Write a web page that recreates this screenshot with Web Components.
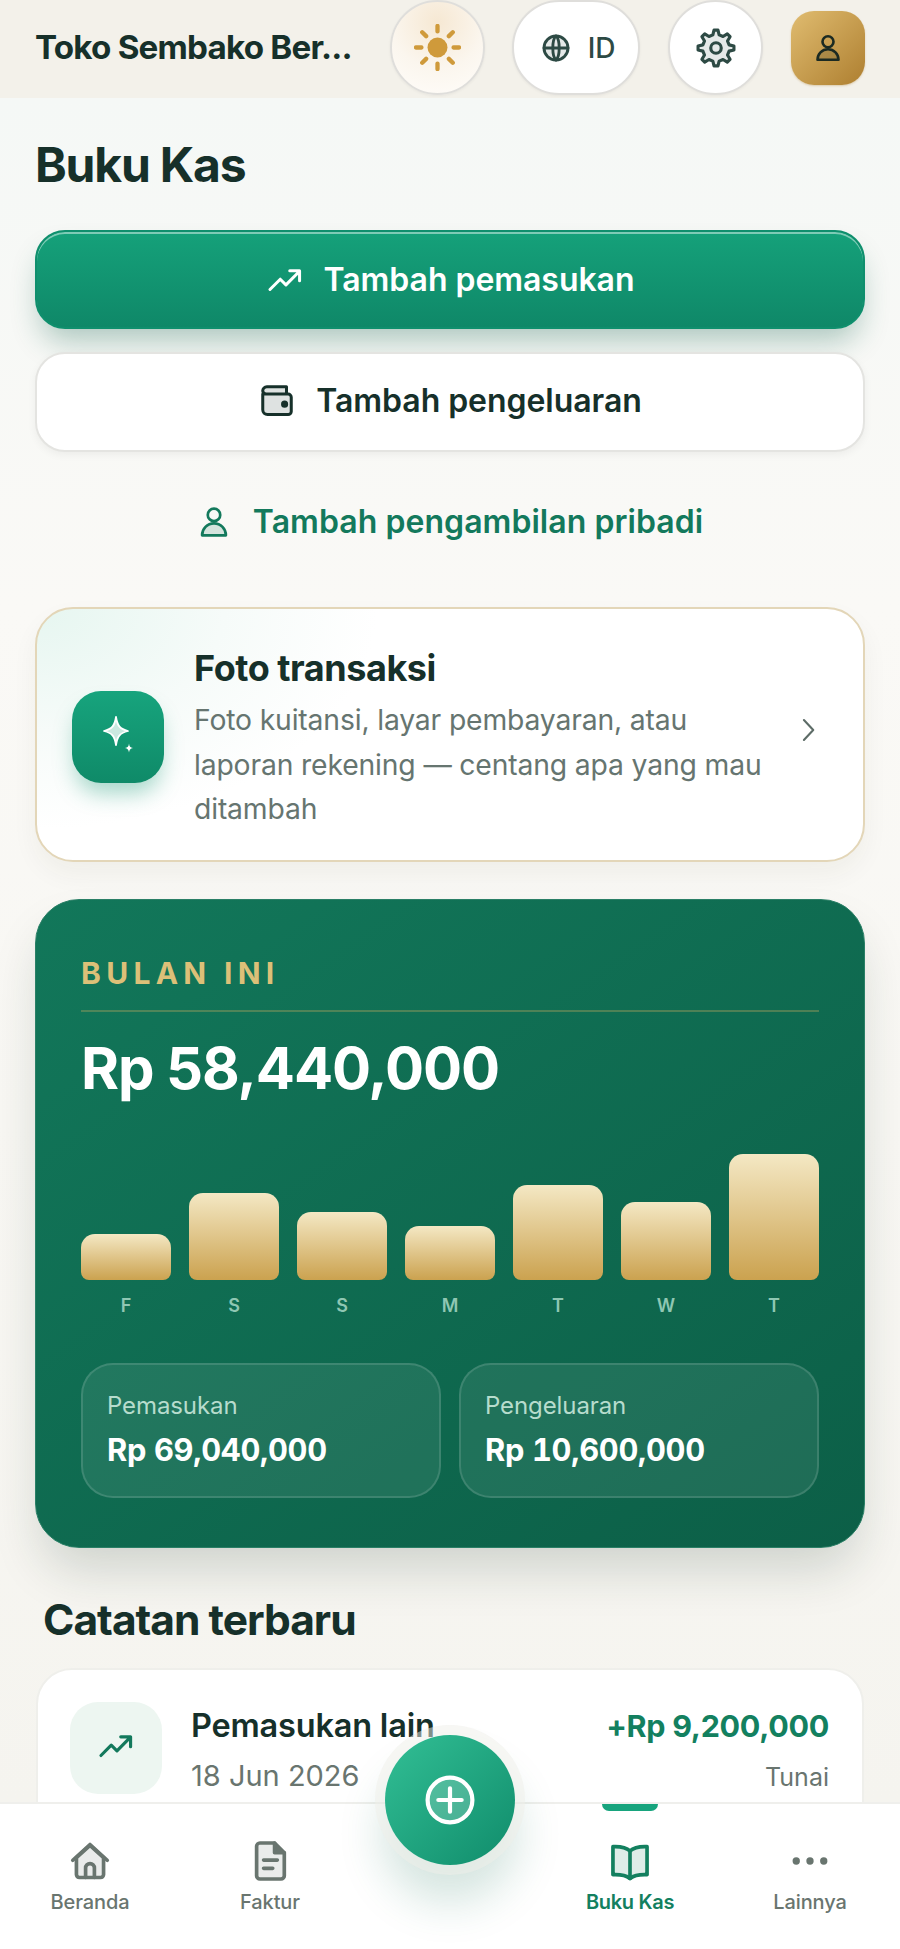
<!DOCTYPE html>
<html lang="id"><head><meta charset="utf-8"><title>Buku Kas</title>
<style>
html,body{margin:0;padding:0;height:1949px;overflow:hidden;background:#f8f8f5;font-family:Inter,"Liberation Sans",sans-serif;color:#16302a}
</style></head><body>
<x-app>
  <x-topbar slot="top" name="Toko Sembako Ber..."></x-topbar>
  <x-heading>Buku Kas</x-heading>
  <x-action kind="primary" icon="trend">Tambah pemasukan</x-action>
  <x-action kind="secondary" icon="wallet">Tambah pengeluaran</x-action>
  <x-action kind="ghost" icon="user">Tambah pengambilan pribadi</x-action>
  <x-promo heading="Foto transaksi">Foto kuitansi, layar pembayaran, atau laporan rekening — centang apa yang mau ditambah</x-promo>
  <x-month label="BULAN INI" amount="Rp 58,440,000">
    <x-stat label="Pemasukan" value="Rp 69,040,000"></x-stat>
    <x-stat label="Pengeluaran" value="Rp 10,600,000"></x-stat>
  </x-month>
  <x-section>Catatan terbaru</x-section>
  <x-tx title="Pemasukan lain" date="18 Jun 2026" amount="+Rp 9,200,000" method="Tunai"></x-tx>
  <x-nav slot="bottom"></x-nav>
</x-app>
<script>
function gearPath(){
  const n=8,R=10.3,r=7.7,pts=[];
  for(let i=0;i<n;i++){
    const a=i*2*Math.PI/n-Math.PI/2,s=2*Math.PI/n;
    [[-.30,r],[-.14,R],[.14,R],[.30,r]].forEach(([o,rad])=>pts.push([12+rad*Math.cos(a+o*s),12+rad*Math.sin(a+o*s)]));
  }
  return 'M'+pts.map(p=>p[0].toFixed(2)+' '+p[1].toFixed(2)).join('L')+'Z';
}
const ICONS={
 sun:'<circle cx="12" cy="12" r="5.100" fill="currentColor" stroke="none"/><path d="M12 1v2.800M12 20.200V23M1 12h2.800M20.200 12H23M4.200 4.200l2 2M17.800 17.800l2 2M4.200 19.800l2-2M17.800 6.200l2-2"/>',
 globe:'<circle cx="12" cy="12" r="9.600" fill="currentColor" fill-opacity=".12"/><path d="M2.400 12h19.200M12 2.400c-3.400 3-3.400 16.200 0 19.200M12 2.400c3.400 3 3.400 16.200 0 19.200"/>',
 gear:'<path d="'+gearPath()+'" fill="currentColor" fill-opacity=".12"/><circle cx="12" cy="12" r="3"/>',
 user:'<circle cx="12" cy="7" r="4.400"/><path d="M3.600 21.400c0-4.600 3.600-8.400 8.400-8.400s8.400 3.800 8.400 8.400z" fill="currentColor" fill-opacity=".16"/>',
 trend:'<path d="M2.500 18 9 11.500l3.600 3.600L21 6.600M15 6.200h6.200v6.200" />',
 wallet:'<path d="M3 7.600v10a3 3 0 0 0 3 3h13a2 2 0 0 0 2-2V9.600a2 2 0 0 0-2-2H5.200A2.200 2.200 0 0 1 3 5.600 2.600 2.600 0 0 1 5.600 3H18v4.600" fill="currentColor" fill-opacity=".14"/><circle cx="16.800" cy="14" r="1.300" fill="currentColor"/>',
 spark:'<path d="M11 2c.7 4.500 2 6 6 7-4 1-5.300 2.500-6 7-.7-4.500-2-6-6-7 4-1 5.300-2.500 6-7z" fill="currentColor" fill-opacity=".78" stroke="currentColor" stroke-width=".9"/><path d="M17.500 15.200c.2 1.500.6 2 2 2.300-1.400.3-1.800.8-2 2.300-.2-1.500-.6-2-2-2.300 1.400-.3 1.800-.8 2-2.300z" fill="currentColor" stroke="none"/>',
 chev:'<path d="m8.500 3.500 8 8.500-8 8.500"/>',
 plus:'<circle cx="12" cy="12" r="9.600" fill="currentColor" fill-opacity=".2"/><path d="M12 7v10M7 12h10"/>',
 home:'<path d="M2.600 11.600 12 3l9.400 8.600" /><path d="M4.600 10.200v9.200a1.600 1.600 0 0 0 1.600 1.600h11.600a1.600 1.600 0 0 0 1.600-1.600v-9.200L12 3.500z" fill="currentColor" fill-opacity=".14"/><path d="M9.600 21v-5.200a2.400 2.400 0 0 1 4.800 0V21"/>',
 doc:'<path d="M6.500 2.200h8l5.300 5.300V20a1.800 1.800 0 0 1-1.800 1.800H6.500A1.800 1.800 0 0 1 4.700 20V4a1.800 1.800 0 0 1 1.800-1.800z" fill="currentColor" fill-opacity=".14"/><path d="M14.500 2.200v5.300h5.300" fill="currentColor"/><path d="M8.500 11.500h7.500M8.500 16h5"/>',
 book:'<path d="M12 6.500C10 4.700 7 4 2.700 4.200v15.300C7 19.300 10 20 12 21.500c2-1.500 5-2.200 9.300-2V4.200C17 4 14 4.700 12 6.500z" fill="currentColor" fill-opacity=".14"/><path d="M12 6.500v15"/>',
 dots:'<circle cx="4.500" cy="12" r="2" fill="currentColor" stroke="none"/><circle cx="12" cy="12" r="2" fill="currentColor" stroke="none"/><circle cx="19.500" cy="12" r="2" fill="currentColor" stroke="none"/>'
};
function def(tag,css,html,setup){
  customElements.define(tag,class extends HTMLElement{
    connectedCallback(){
      if(this.shadowRoot)return;
      const a=this.attachShadow({mode:'open'});
      a.innerHTML='<style>'+css+'</style>'+(typeof html==='function'?html(this):html);
      if(setup)setup(this,a);
    }
  });
}
def('x-icon',':host{display:inline-flex;width:var(--s,24px);height:var(--s,24px);flex:none}svg{width:100%;height:100%;fill:none;stroke:currentColor;stroke-width:var(--w,2);stroke-linecap:round;stroke-linejoin:round;display:block}',
  h=>'<svg viewBox="0 0 24 24" aria-hidden="true">'+ICONS[h.getAttribute('name')]+'</svg>');
def('x-app',':host{display:flex;flex-direction:column;height:1949px;position:relative;overflow:hidden}.main{flex:1;min-height:0;overflow:hidden;display:flex;flex-direction:column;padding:0 35px;background:linear-gradient(180deg,#f5f8f6 0,#faf9f6 30%,#f8f7f3 60%,#f5f4ef 100%)}',
  '<slot name="top"></slot><div class="main"><slot></slot></div><slot name="bottom"></slot>');
def('x-topbar',`:host{display:flex;align-items:center;height:98px;background:#f3f1ea;padding:0 35px 3px;box-sizing:border-box;flex:none;gap:0}
 .t{flex:none;width:355px;font:700 33.200px/1 Inter,sans-serif;letter-spacing:-.8px;color:#16302a;white-space:nowrap}
 .b{box-sizing:border-box;height:95px;background:#fff;border:2px solid #dfdedb;border-radius:48px;display:flex;align-items:center;justify-content:center;color:#2d4a44;box-shadow:0 1px 3px rgba(0,0,0,.05)}
 .sun{width:95px;margin-left:0;color:#cf9a3b;background:radial-gradient(circle at 50% 22%,#f6e8d3 0,#fbf6ee 55%,#fffdfa 100%)}
 .lang{width:129px;margin-left:27px;gap:17px;font:550 28px/1 Inter,sans-serif;padding-left:4px}
 .gear{width:95px;margin-left:28px}
 .av{box-sizing:border-box;width:74px;height:74px;border-radius:23px;margin-left:28px;background:linear-gradient(135deg,#e0bc70,#ae7f30);display:flex;align-items:center;justify-content:center;color:#1b2a22;box-shadow:0 1px 2px rgba(170,120,40,.3)}`,
 h=>`<div class="t">${h.getAttribute('name')}</div>
 <div class="b sun" aria-label="Tema"><x-icon name="sun" style="--s:47px;--w:2.200"></x-icon></div>
 <div class="b lang"><x-icon name="globe" style="--s:30px;--w:2.300"></x-icon><span>ID</span></div>
 <div class="b gear"><x-icon name="gear" style="--s:42px;--w:1.800"></x-icon></div>
 <div class="av"><x-icon name="user" style="--s:30px;--w:2.100"></x-icon></div>`);
def('x-heading',':host{display:block;font:700 48px/54px Inter,sans-serif;letter-spacing:-1.200px;color:#16302a;margin:40px 0 38px}','<slot></slot>');
def('x-action',`:host{display:flex;align-items:center;justify-content:center;box-sizing:border-box;height:99px;gap:20px;border-radius:30px;font:600 32px/1 Inter,sans-serif;letter-spacing:-.05px;flex:none;white-space:nowrap}
 :host([kind=primary]){color:#fff;background:linear-gradient(180deg,#15a17a,#0f8868);border:2px solid #0f8f6d;box-shadow:inset 0 2px 0 rgba(255,255,255,.45),0 18px 30px -6px rgba(15,95,75,.32);margin-bottom:23px}
 :host([kind=secondary]){color:#16302a;background:#fff;border:2px solid #e4e4e1;box-shadow:0 3px 8px rgba(0,0,0,.05);height:100px;padding-bottom:3px;margin-bottom:21px}
 :host([kind=ghost]){color:#13795c;height:98px;margin-bottom:36px;gap:22px;letter-spacing:.05px}
 :host([kind=ghost]) x-icon{--s:34px}
 x-icon{--s:38px;--w:1.900}`,
 h=>`<x-icon name="${h.getAttribute('icon')}"></x-icon><span><slot></slot></span>`);
def('x-promo',`:host{display:flex;align-items:center;box-sizing:border-box;height:255px;border:2px solid #e3d6b8;border-radius:38px;padding:5px 41px 0 35px;background:radial-gradient(ellipse 340px 220px at 0 0,#e6f6f0 0,#f6fbf9 55%,#fff 100%),#fff;box-shadow:0 12px 26px rgba(60,50,20,.05);flex:none;margin-bottom:37px}
 .tile{width:92px;height:92px;border-radius:29px;background:linear-gradient(180deg,#17a47d,#0f8a68);color:#fff;display:flex;align-items:center;justify-content:center;box-shadow:0 14px 22px -4px rgba(20,150,115,.38);flex:none}
 .c{flex:1;margin-left:30px;min-width:0;padding-top:5px}
 .h{font:700 36px/42px Inter,sans-serif;letter-spacing:-.45px;color:#16302a;margin-bottom:9px}
 .p{font:400 28.300px/44.750px Inter,sans-serif;letter-spacing:-.15px;color:#667570;width:575px}
 .chev{color:#5d6c67;margin:0 0 14px 6px}`,
 h=>`<div class="tile"><x-icon name="spark" style="--s:48px"></x-icon></div><div class="c"><div class="h">${h.getAttribute('heading')}</div><div class="p"><slot></slot></div></div><x-icon class="chev" name="chev" style="--s:28px;--w:1.800"></x-icon>`);
def('x-bar',':host{display:flex;flex-direction:column;align-items:stretch;justify-content:flex-end;height:100%}.b{height:var(--h);border-radius:14px 14px 8px 8px;background:linear-gradient(180deg,#f4e8c4,#cba24f)}','<div class="b"></div>');
def('x-month',`:host{display:block;box-sizing:border-box;height:649px;border-radius:44px;padding:58px 45px 0;background:linear-gradient(145deg,#12775a,#0c5f47);box-shadow:0 28px 50px -8px rgba(20,50,40,.18);border:1px solid #2a7f66;flex:none;margin-bottom:48px;color:#fff}
 .l{font:700 30px/30px Inter,sans-serif;letter-spacing:5.300px;color:#dcc078;padding-bottom:22px;border-bottom:2px solid rgba(210,175,95,.32)}
 .a{font:700 58px/68px Inter,sans-serif;letter-spacing:-1.100px;margin-top:22px;color:#fff}
 .bars{display:grid;grid-template-columns:repeat(7,1fr);column-gap:18px;height:127px;margin-top:51px}
 .days{display:grid;grid-template-columns:repeat(7,1fr);column-gap:18px;margin-top:14px;font:600 18px/24px Inter,sans-serif;color:#8fc7b3;text-align:center}
 .stats{display:grid;grid-template-columns:1fr 1fr;gap:18px;margin-top:45px}`,
 h=>{const H=[46,87,68,54,95,78,126],D=['F','S','S','M','T','W','T'];return `<div class="l">${h.getAttribute('label')}</div><div class="a">${h.getAttribute('amount')}</div>
 <div class="bars">${H.map(v=>`<x-bar style="--h:${v}px"></x-bar>`).join('')}</div>
 <div class="days">${D.map(d=>`<span>${d}</span>`).join('')}</div><div class="stats"><slot></slot></div>`});
def('x-stat',`:host{display:block;box-sizing:border-box;height:135px;border-radius:32px;background:rgba(255,255,255,.08);border:2px solid rgba(255,255,255,.13);padding:25px 0 0 24px}
 .k{font:400 24px/32px Inter,sans-serif;color:#b7dccd;letter-spacing:-.1px}.v{font:700 30.800px/40px Inter,sans-serif;color:#fff;letter-spacing:-.3px;margin-top:8px;font-variant-numeric:tabular-nums}`,
 h=>`<div class="k">${h.getAttribute('label')}</div><div class="v">${h.getAttribute('value')}</div>`);
def('x-section',':host{display:block;font:700 42.500px/48px Inter,sans-serif;letter-spacing:-1px;color:#16302a;padding-left:8px;margin-bottom:24px;flex:none}','<slot></slot>');
def('x-tx',`:host{display:flex;box-sizing:border-box;height:200px;margin:0 1px;background:#fff;border:2px solid #efefeb;border-radius:36px;padding:32px 33px 0 32px;flex:none}
 .tile{width:92px;height:92px;border-radius:28px;background:#edf6f1;color:#13795c;display:flex;align-items:center;justify-content:center;flex:none}
 .tile x-icon{margin-bottom:5px}
 .m{flex:1;margin-left:29px}.r{text-align:right}
 .t{font:600 32.500px/40px Inter,sans-serif;letter-spacing:-.2px;color:#16302a;margin-top:4px}.d{font:400 29px/40px Inter,sans-serif;color:#69756f;margin-top:10px}
 .a{font:700 30.500px/40px Inter,sans-serif;letter-spacing:-.3px;color:#13805f;margin-top:4px}.s{font:400 25px/36px Inter,sans-serif;color:#69756f;margin-top:13px}`,
 h=>`<div class="tile"><x-icon name="trend" style="--s:38px;--w:2"></x-icon></div><div class="m"><div class="t">${h.getAttribute('title')}</div><div class="d">${h.getAttribute('date')}</div></div><div class="r"><div class="a">${h.getAttribute('amount')}</div><div class="s">${h.getAttribute('method')}</div></div>`);
def('x-nav-item',`:host{display:flex;flex-direction:column;align-items:center;padding-top:35px;color:#69756f;font:500 20px/28px Inter,sans-serif;letter-spacing:-.1px;position:relative}
 :host([active]){color:#13805f;font-weight:600;letter-spacing:-.3px}
 :host([active])::before{content:"";position:absolute;top:0;left:62px;width:56px;height:7px;background:#17a47d;border-radius:0 0 7px 7px}
 x-icon{--s:44px;--w:2;margin-bottom:5px}span{display:block}`,
 h=>`<x-icon name="${h.getAttribute('icon')}"></x-icon><span><slot></slot></span>`);
def('x-fab',`:host{position:absolute;left:385px;top:-69px;width:130px;height:130px;border-radius:50%;background:linear-gradient(135deg,#32bf95,#108c6b);color:#fff;display:flex;align-items:center;justify-content:center;box-shadow:0 0 0 10px rgba(240,239,234,.5),0 34px 44px 4px rgba(20,110,85,.18)}
 x-icon{--s:56px;--w:1.800}`,'<x-icon name="plus"></x-icon>');
def('x-nav',`:host{display:grid;grid-template-columns:repeat(5,180px);box-sizing:border-box;height:147px;background:#fff;border-top:2px solid #efefec;position:relative;flex:none}`,
 `<x-nav-item icon="home">Beranda</x-nav-item><x-nav-item icon="doc">Faktur</x-nav-item><div></div><x-nav-item icon="book" active>Buku Kas</x-nav-item><x-nav-item icon="dots">Lainnya</x-nav-item><x-fab aria-label="Tambah"></x-fab>`);
</script>
</body></html>
